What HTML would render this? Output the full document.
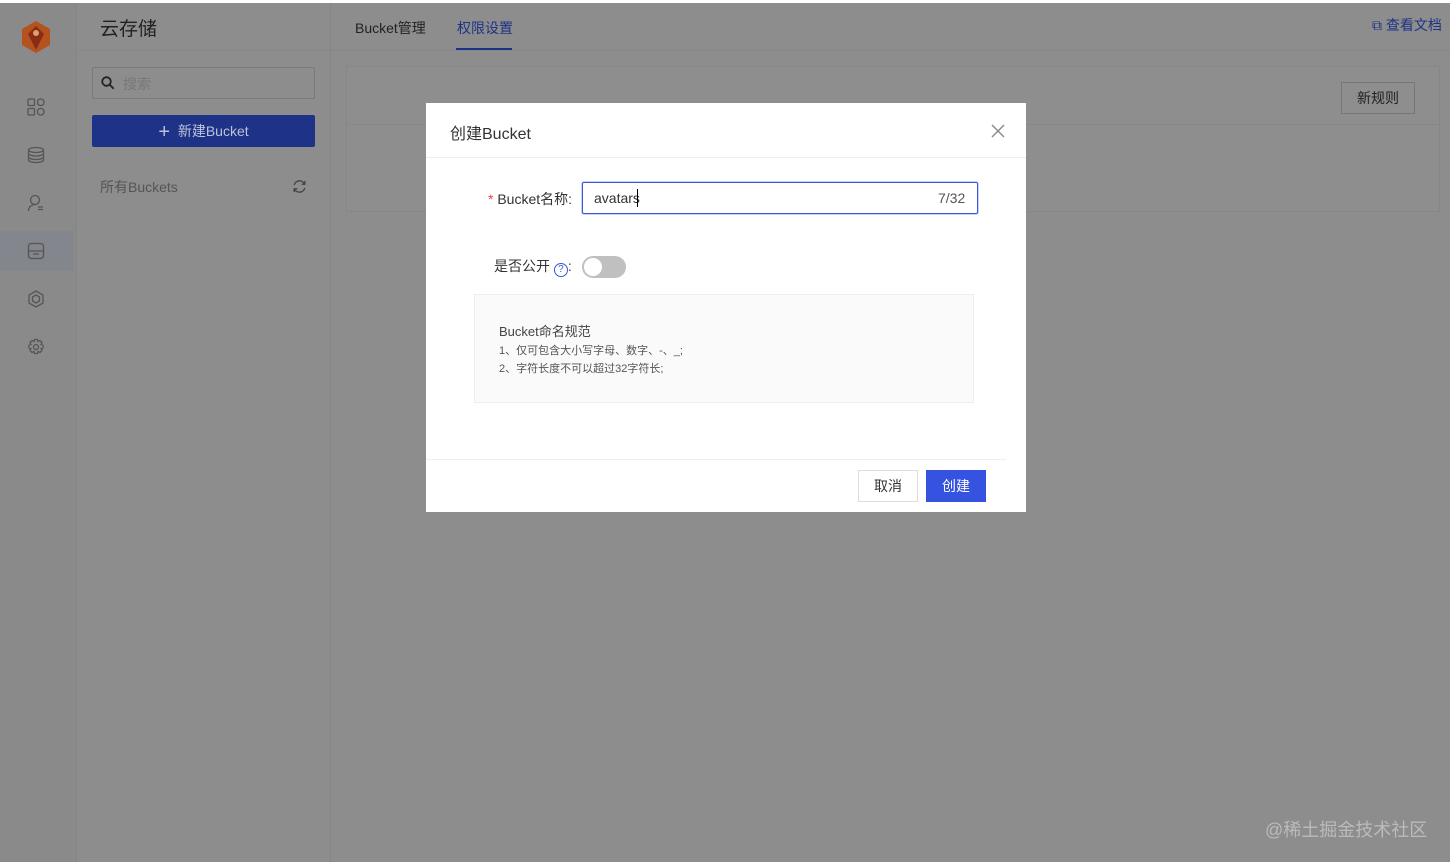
<!DOCTYPE html><html><head><meta charset="utf-8"><style>
*{margin:0;padding:0;box-sizing:border-box}
body{width:1450px;height:862px;overflow:hidden;font-family:"Liberation Sans","Noto Sans CJK SC",sans-serif;background:#8d8d8d;position:relative;color:#333}
.a{position:absolute}
</style></head><body>
<div class="a" style="left:0;top:0;width:1450px;height:3px;background:#fff"></div>
<div class="a" style="left:0;top:3px;width:77px;height:859px;background:#8a8a8a;border-right:1px solid #858585"></div>
<div class="a" style="left:0;top:231px;width:74px;height:40px;background:#83868c"></div>
<svg class="a" style="left:20px;top:20px" width="32" height="34" viewBox="0 0 32 34"><polygon points="16,1 30,9 30,25 16,33 2,25 2,9" fill="#b4531e"/><polygon points="16,6 24,14 16,30 8,14" fill="#8a2c15"/><circle cx="16" cy="13" r="3" fill="#d9a070"/></svg>
<svg class="a" style="left:27px;top:98px" width="18" height="18" viewBox="0 0 18 18" fill="none" stroke="#555" stroke-width="1.3"><rect x="1" y="1" width="6.5" height="6.5" rx="1"/><rect x="10.5" y="1" width="6.5" height="6.5" rx="3"/><rect x="1" y="10.5" width="6.5" height="6.5" rx="1"/><rect x="10.5" y="10.5" width="6.5" height="6.5" rx="3"/></svg>
<svg class="a" style="left:27px;top:146px" width="18" height="18" viewBox="0 0 18 18" fill="none" stroke="#555" stroke-width="1.3"><ellipse cx="9" cy="4" rx="7.5" ry="2.5"/><path d="M1.5 4v10c0 1.4 3.4 2.5 7.5 2.5s7.5-1.1 7.5-2.5V4M1.5 7.5c0 1.4 3.4 2.5 7.5 2.5s7.5-1.1 7.5-2.5M1.5 11c0 1.4 3.4 2.5 7.5 2.5s7.5-1.1 7.5-2.5"/></svg>
<svg class="a" style="left:27px;top:194px" width="18" height="18" viewBox="0 0 18 18" fill="none" stroke="#555" stroke-width="1.3"><circle cx="8" cy="6" r="4.5"/><path d="M1.5 17c0-4 3-6.5 6.5-6.5M11 13h5M11 15.5h5"/></svg>
<svg class="a" style="left:27px;top:242px" width="18" height="18" viewBox="0 0 18 18" fill="none" stroke="#555" stroke-width="1.3"><rect x="1.5" y="1.5" width="15" height="15" rx="3"/><path d="M1.5 9h15M6 12h6"/></svg>
<svg class="a" style="left:27px;top:290px" width="18" height="18" viewBox="0 0 18 18" fill="none" stroke="#555" stroke-width="1.3"><polygon points="9,1 16,5 16,13 9,17 2,13 2,5"/><polygon points="9,5 12.5,7 12.5,11 9,13 5.5,11 5.5,7"/></svg>
<svg class="a" style="left:27px;top:338px" width="18" height="18" viewBox="0 0 18 18" fill="none" stroke="#555" stroke-width="1.3"><circle cx="9" cy="9" r="2.5"/><path d="M7.5 1.5h3l.5 2 2-1 2 2-1 2 2 .5v3l-2 .5 1 2-2 2-2-1-.5 2h-3l-.5-2-2 1-2-2 1-2-2-.5v-3l2-.5-1-2 2-2 2 1z"/></svg>
<div class="a" style="left:78px;top:3px;width:253px;height:859px;background:#8d8d8d;border-right:1px solid #858585"></div>
<div class="a" style="left:78px;top:50px;width:1372px;height:1px;background:#878787"></div>
<div class="a" style="left:100px;top:14px;font-size:19px;color:#222">云存储</div>
<div class="a" style="left:92px;top:67px;width:223px;height:32px;border:1px solid #7a7a7a;border-radius:2px"></div>
<svg class="a" style="left:101px;top:76px" width="14" height="14" viewBox="0 0 14 14" fill="none" stroke="#222" stroke-width="1.8"><circle cx="5.5" cy="5.5" r="4.3"/><path d="M8.7 8.7l4 4"/></svg>
<div class="a" style="left:123px;top:74px;font-size:14px;color:#777">搜索</div>
<div class="a" style="left:92px;top:115px;width:223px;height:32px;background:#1e3287;border-radius:2px;color:#bcc3d8;font-size:14px;text-align:center;line-height:32px"><span style="font-size:20px;vertical-align:-2px">+</span>&nbsp; 新建Bucket</div>
<div class="a" style="left:100px;top:177px;font-size:14px;color:#555">所有Buckets</div>
<svg class="a" style="left:292px;top:179px" width="15" height="15" viewBox="0 0 15 15" fill="none" stroke="#444" stroke-width="1.4"><path d="M12.5 5A5.5 5.5 0 0 0 2.2 6M2.5 10a5.5 5.5 0 0 0 10.3-1"/><path d="M12.8 2v3.2H9.6M2.2 13v-3.2h3.2"/></svg>
<div class="a" style="left:355px;top:18px;font-size:14px;color:#222">Bucket管理</div>
<div class="a" style="left:457px;top:18px;font-size:14px;color:#1e3287">权限设置</div>
<div class="a" style="left:456px;top:48px;width:56px;height:2px;background:#1e3287"></div>
<div class="a" style="left:1372px;top:15px;font-size:14px;color:#1e3287">⧉ 查看文档</div>
<div class="a" style="left:346px;top:66px;width:1094px;height:146px;border:1px solid #878787;background:#8e8e8e"></div>
<div class="a" style="left:347px;top:124px;width:1092px;height:1px;background:#888"></div>
<div class="a" style="left:1341px;top:82px;width:74px;height:32px;border:1px solid #777;font-size:14px;color:#222;text-align:center;line-height:30px">新规则</div>
<div class="a" style="left:1265px;top:816px;font-size:18px;color:#bbb">@稀土掘金技术社区</div>
<div class="a" style="left:426px;top:103px;width:600px;height:409px;background:#fff">
<div class="a" style="left:24px;top:17px;font-size:16px;color:#333">创建Bucket</div>
<svg class="a" style="left:565px;top:21px" width="14" height="14" viewBox="0 0 14 14" stroke="#888" stroke-width="1.4"><path d="M1 1l12 12M13 1L1 13"/></svg>
<div class="a" style="left:0;top:54px;width:600px;height:1px;background:#eee"></div>
<div class="a" style="left:62px;top:86px;font-size:14px;color:#333"><span style="color:#e44">*</span> Bucket名称:</div>
<div class="a" style="left:156px;top:79px;width:396px;height:32px;border:1px solid #3b55d9;border-radius:2px;box-shadow:0 0 0 1px #c7d0f5"></div>
<div class="a" style="left:168px;top:87px;font-size:14px;color:#333">avatars</div>
<div class="a" style="left:211px;top:86px;width:1px;height:18px;background:#000"></div>
<div class="a" style="left:512px;top:87px;font-size:14px;color:#555">7/32</div>
<div class="a" style="left:68px;top:153px;font-size:14px;color:#333">是否公开 <span style="display:inline-block;width:14px;height:14px;border:1px solid #3b55d9;border-radius:50%;color:#3b55d9;font-size:10px;text-align:center;line-height:12px;vertical-align:-1px">?</span>:</div>
<div class="a" style="left:156px;top:153px;width:44px;height:22px;border-radius:11px;background:#c0c0c0"></div>
<div class="a" style="left:158px;top:155px;width:18px;height:18px;border-radius:50%;background:#fff"></div>
<div class="a" style="left:48px;top:191px;width:500px;height:109px;border:1px solid #eee;background:#fafafa"></div>
<div class="a" style="left:73px;top:218px;font-size:13px;color:#444">Bucket命名规范</div>
<div class="a" style="left:73px;top:239px;font-size:11px;color:#555;line-height:18px">1、仅可包含大小写字母、数字、-、_;<br>2、字符长度不可以超过32字符长;</div>
<div class="a" style="left:0;top:356px;width:580px;height:1px;background:#eee"></div>
<div class="a" style="left:432px;top:367px;width:60px;height:32px;border:1px solid #ddd;font-size:14px;text-align:center;line-height:30px;color:#333">取消</div>
<div class="a" style="left:500px;top:367px;width:60px;height:32px;background:#3553e0;font-size:14px;text-align:center;line-height:32px;color:#fff">创建</div>
</div>
</body></html>
